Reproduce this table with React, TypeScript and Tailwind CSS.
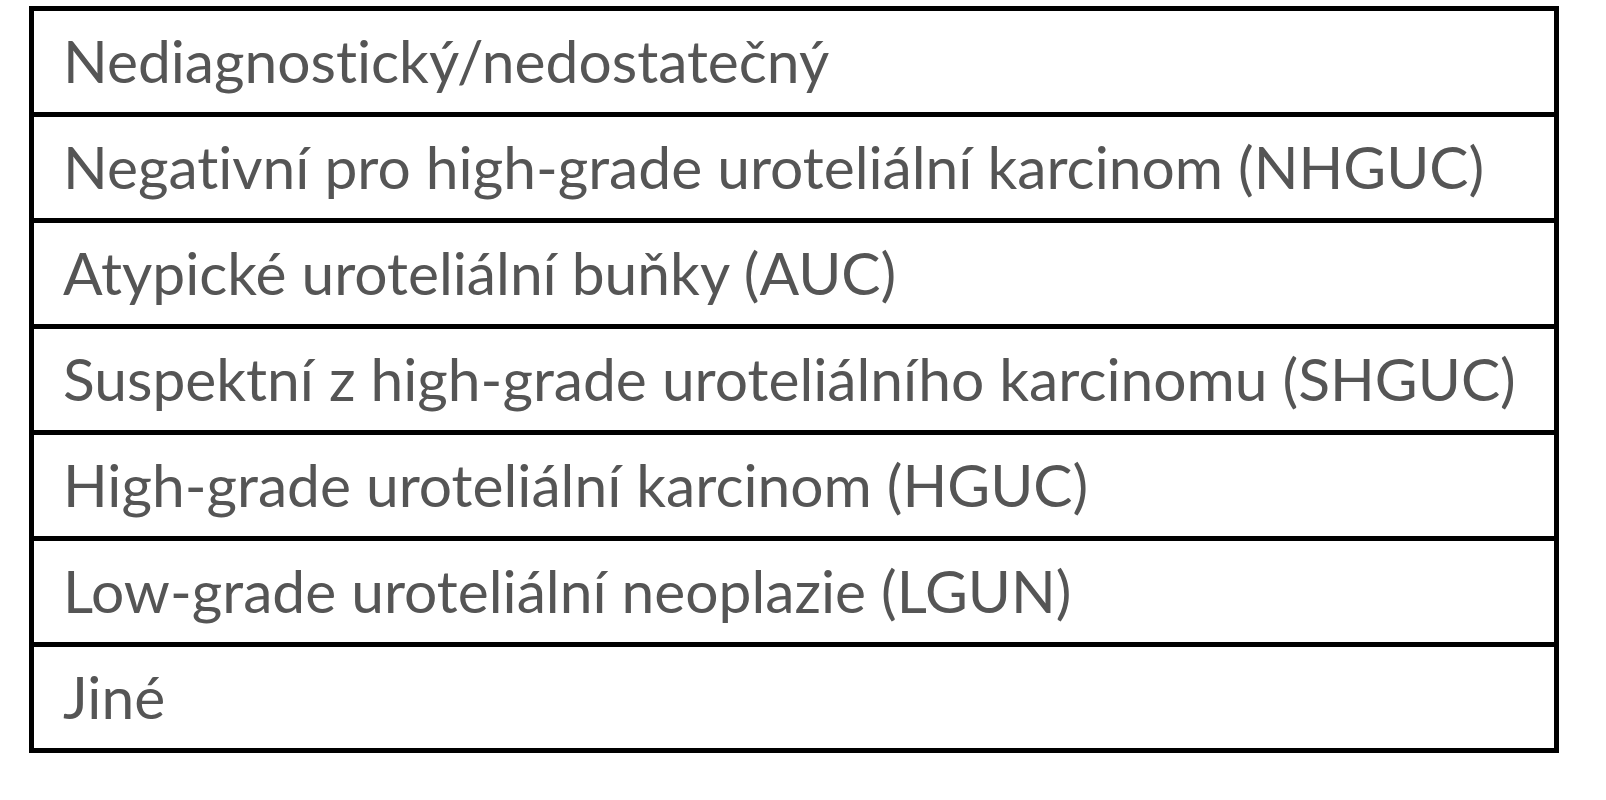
import React from "react";

const rows = [
  "Nediagnostický/nedostatečný",
  "Negativní pro high-grade uroteliální karcinom (NHGUC)",
  "Atypické uroteliální buňky (AUC)",
  "Suspektní z high-grade uroteliálního karcinomu (SHGUC)",
  "High-grade uroteliální karcinom (HGUC)",
  "Low-grade uroteliální neoplazie (LGUN)",
  "Jiné",
];

export default function App() {
  return (
    <div className="w-[1606px] h-[800px] bg-white overflow-hidden pt-[6px] pl-[29px]">
      <div className="w-[1530px] border-[5px] border-black flex flex-col">
        {rows.map((r, i) => (
          <div
            key={i}
            className={
              "flex items-center pl-[29px] text-[#555555] text-[58.7px] leading-none whitespace-nowrap [font-variant-ligatures:none] " +
              (i === 0 ? "h-[101px]" : "h-[106px] border-t-[5px] border-black")
            }
            style={{ fontFamily: "Lato, 'Liberation Sans', sans-serif" }}
          >
            {r}
          </div>
        ))}
      </div>
    </div>
  );
}
